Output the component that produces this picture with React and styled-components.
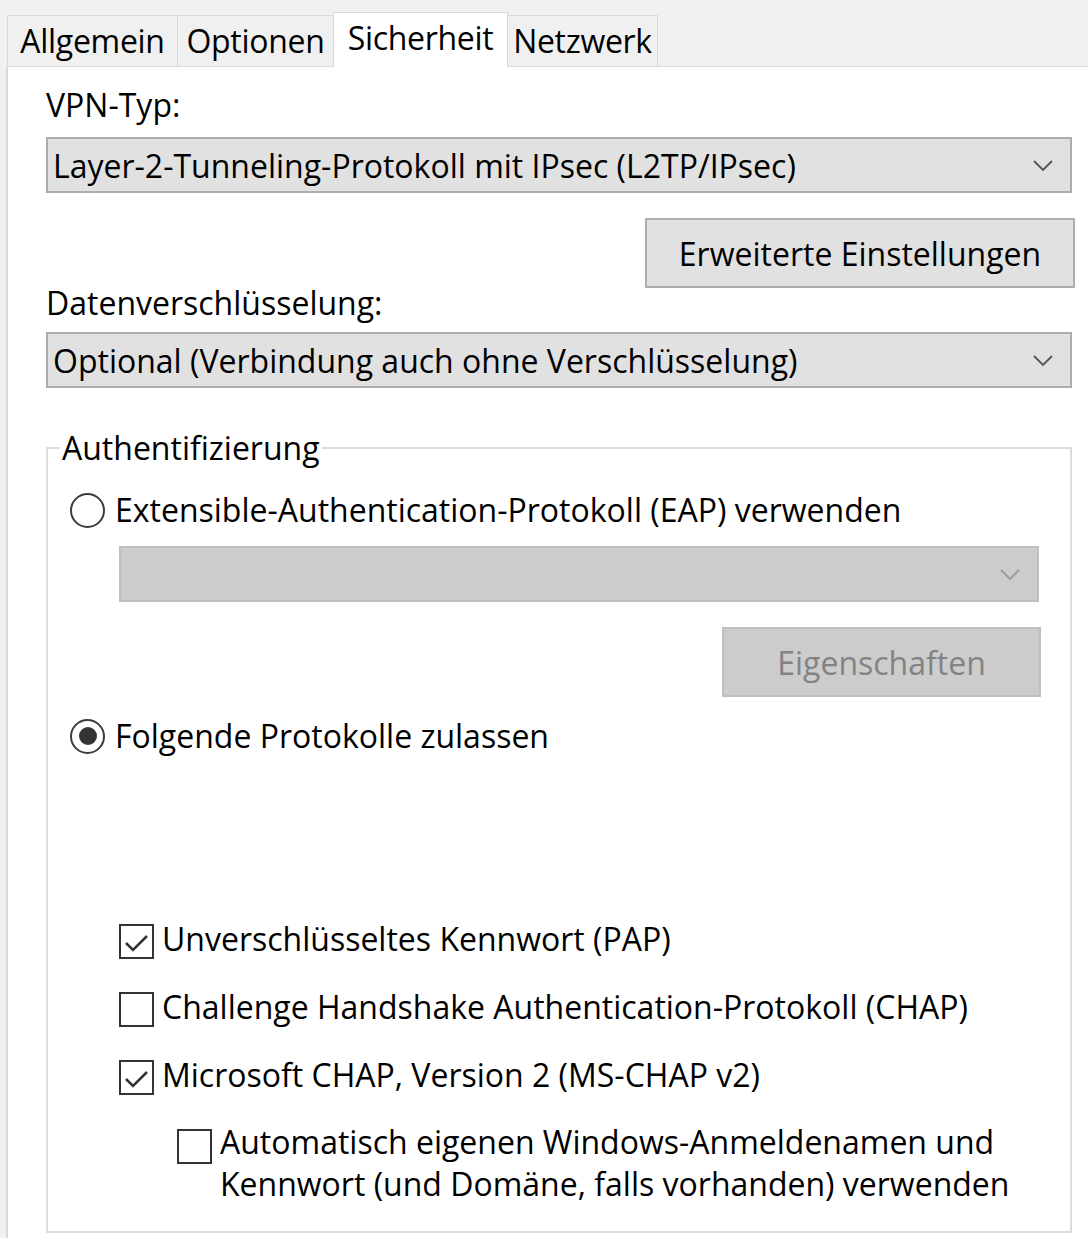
import styled, { createGlobalStyle } from "styled-components";

const GlobalStyle = createGlobalStyle`
  html, body {
    margin: 0;
    padding: 0;
    background: #f0f0f0;
  }
  body {
    font-family: "Open Sans", "Liberation Sans", sans-serif;
    font-size: 32px;
    color: #000;
    overflow: hidden;
  }
`;

const Window = styled.div`
  width: 1088px;
  height: 1238px;
  box-sizing: border-box;
  padding: 12px 0 0 6px;
`;

const TabStrip = styled.div`
  display: flex;
  align-items: flex-end;
  height: 55px;
  padding-left: 2px;
  position: relative;
  z-index: 1;
`;

const Tab = styled.div`
  box-sizing: border-box;
  display: flex;
  align-items: center;
  justify-content: center;
  width: ${(p) => p.$w}px;
  padding-bottom: ${(p) => (p.$active ? "4px" : "0")};
  height: ${(p) => (p.$active ? "55px" : "51px")};
  margin-bottom: ${(p) => (p.$active ? "0" : "1px")};
  margin-left: -1px;
  background: ${(p) => (p.$active ? "#fff" : "#f0f0f0")};
  border: 1px solid #d9d9d9;
  border-bottom: none;
  white-space: nowrap;
  letter-spacing: -0.3px;
  line-height: 1;
`;

const Panel = styled.div`
  background: #fff;
  border: 1px solid #d9d9d9;
  border-left-width: 2px;
  border-right: none;
  margin-top: -1px;
  height: 1220px;
  box-sizing: border-box;
  padding: 23px 0 0 38px;
`;

const Content = styled.div`
  width: 1026px;
  display: flex;
  flex-direction: column;
`;

const Label = styled.div`
  line-height: 30px;
  height: 30px;
  margin-top: ${(p) => p.$mt || 0}px;
`;

const Select = styled.div`
  box-sizing: border-box;
  display: flex;
  align-items: center;
  justify-content: space-between;
  height: 56px;
  margin-top: ${(p) => p.$mt || 0}px;
  margin-left: ${(p) => p.$ml || 0}px;
  padding: 0 17px 0 5px;
  background: ${(p) => (p.$disabled ? "#cccccc" : "#e1e1e1")};
  border: 2px solid ${(p) => (p.$disabled ? "#bfbfbf" : "#adadad")};
  white-space: nowrap;

  & svg {
    flex: none;
  }
`;

const ButtonRow = styled.div`
  display: flex;
  justify-content: flex-end;
  margin-top: ${(p) => p.$mt || 0}px;
  margin-right: ${(p) => p.$mr || 0}px;
`;

const Button = styled.div`
  box-sizing: border-box;
  display: flex;
  align-items: center;
  justify-content: center;
  width: ${(p) => p.$w}px;
  height: 70px;
  background: ${(p) => (p.$disabled ? "#cccccc" : "#e1e1e1")};
  border: 2px solid ${(p) => (p.$disabled ? "#bfbfbf" : "#adadad")};
  color: ${(p) => (p.$disabled ? "#838383" : "#000")};
  white-space: nowrap;
`;

const Group = styled.fieldset`
  margin: 45px 0 0;
  padding: 0;
  border: 2px solid #dcdcdc;
  min-width: 0;
`;

const Legend = styled.legend`
  margin-left: 12px;
  padding: 0 2px;
  line-height: 30px;
`;

const GroupBody = styled.div`
  display: flex;
  flex-direction: column;
  padding: 27px 31px 24px 22px;
`;

const OptionRow = styled.div`
  display: flex;
  align-items: ${(p) => (p.$top ? "flex-start" : "center")};
  gap: ${(p) => p.$gap || 8}px;
  line-height: ${(p) => (p.$top ? "42px" : "40px")};
  margin-top: ${(p) => p.$mt || 0}px;
  margin-left: ${(p) => p.$ml || 0}px;
  white-space: nowrap;
`;

const OptionText = styled.span`
  position: relative;
  top: -2px;
`;

const Radio = styled.span`
  flex: none;
  box-sizing: border-box;
  width: 35px;
  height: 35px;
  border-radius: 50%;
  border: 2px solid #3c3c3c;
  background: #fff;
  display: flex;
  align-items: center;
  justify-content: center;

  &::after {
    content: "";
    width: 18px;
    height: 18px;
    border-radius: 50%;
    background: #333;
    display: ${(p) => (p.$checked ? "block" : "none")};
  }
`;

const Box = styled.span`
  flex: none;
  box-sizing: border-box;
  width: 35px;
  height: 35px;
  border: 2px solid #333;
  background: #fff;
  margin-top: ${(p) => p.$mt || 0}px;
  display: flex;
`;

function Chevron({ disabled }) {
  return (
    <svg width="20" height="11" viewBox="0 0 20 11">
      <path
        d="M1 1 L10 10 L19 1"
        fill="none"
        stroke={disabled ? "#9a9a9a" : "#555"}
        strokeWidth="1.8"
      />
    </svg>
  );
}

function Checkbox({ checked, mt }) {
  return (
    <Box $mt={mt}>
      {checked && (
        <svg width="31" height="31" viewBox="0 0 31 31">
          <path
            d="M5 17 L12 24 L26 10"
            fill="none"
            stroke="#333"
            strokeWidth="2.5"
          />
        </svg>
      )}
    </Box>
  );
}

export default function App() {
  return (
    <>
      <GlobalStyle />
      <Window>
        <TabStrip>
          <Tab $w={171}>Allgemein</Tab>
          <Tab $w={157}>Optionen</Tab>
          <Tab $w={175} $active>
            Sicherheit
          </Tab>
          <Tab $w={151}>Netzwerk</Tab>
        </TabStrip>
        <Panel>
          <Content>
            <Label>VPN-Typ:</Label>
            <Select $mt={17}>
              <span>Layer-2-Tunneling-Protokoll mit IPsec (L2TP/IPsec)</span>
              <Chevron />
            </Select>
            <ButtonRow $mt={25} $mr={-3}>
              <Button $w={430}>Erweiterte Einstellungen</Button>
            </ButtonRow>
            <Label>Datenverschlüsselung:</Label>
            <Select $mt={14}>
              <span>Optional (Verbindung auch ohne Verschlüsselung)</span>
              <Chevron />
            </Select>
            <Group>
              <Legend>Authentifizierung</Legend>
              <GroupBody>
                <OptionRow $gap={10}>
                  <Radio />
                  <span>Extensible-Authentication-Protokoll (EAP) verwenden</span>
                </OptionRow>
                <Select $mt={16} $ml={49} $disabled>
                  <span />
                  <Chevron disabled />
                </Select>
                <ButtonRow $mt={25} $mr={-2}>
                  <Button $w={319} $disabled>
                    Eigenschaften
                  </Button>
                </ButtonRow>
                <OptionRow $mt={19} $gap={10}>
                  <Radio $checked />
                  <span>Folgende Protokolle zulassen</span>
                </OptionRow>
                <OptionRow $mt={165} $ml={49}>
                  <Checkbox checked />
                  <OptionText>Unverschlüsseltes Kennwort (PAP)</OptionText>
                </OptionRow>
                <OptionRow $mt={28} $ml={49}>
                  <Checkbox />
                  <OptionText>
                    Challenge Handshake Authentication-Protokoll (CHAP)
                  </OptionText>
                </OptionRow>
                <OptionRow $mt={28} $ml={49}>
                  <Checkbox checked />
                  <OptionText>Microsoft CHAP, Version 2 (MS-CHAP v2)</OptionText>
                </OptionRow>
                <OptionRow $mt={26} $ml={107} $top>
                  <Checkbox mt={6} />
                  <OptionText>
                    Automatisch eigenen Windows-Anmeldenamen und
                    <br />
                    Kennwort (und Domäne, falls vorhanden) verwenden
                  </OptionText>
                </OptionRow>
              </GroupBody>
            </Group>
          </Content>
        </Panel>
      </Window>
    </>
  );
}
